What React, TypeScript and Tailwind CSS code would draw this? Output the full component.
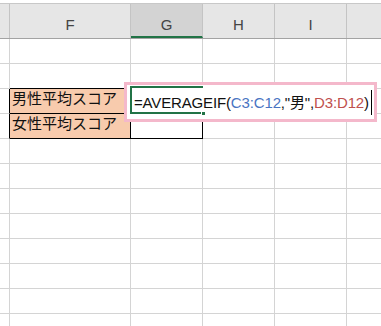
import React from "react";

const cols = [
  { key: "E", w: "w-[10px]", label: "" },
  { key: "F", w: "w-[121px]", label: "F" },
  { key: "G", w: "w-[72px]", label: "G" },
  { key: "H", w: "w-[72px]", label: "H" },
  { key: "I", w: "w-[72px]", label: "I" },
  { key: "J", w: "w-[72px]", label: "" },
];

// body cell styling; rows are 1-based like the sheet
const cellClass = (row: number, col: string) => {
  if (col === "E" && (row === 3 || row === 4))
    return "border-r border-b border-r-black border-b-[#d4d4d4]";
  if (row === 2 && (col === "F" || col === "G"))
    return "border-r border-b border-r-[#d4d4d4] border-b-black";
  if ((row === 3 || row === 4) && col === "F")
    return "border-r border-b border-black bg-[#f8cbad]";
  if ((row === 3 || row === 4) && col === "G")
    return "border-r border-b border-black";
  return "border-r border-b border-r-[#d4d4d4] border-b-[#d4d4d4]";
};

const labels: Record<number, string> = { 3: "男性平均スコア", 4: "女性平均スコア" };

export default function App() {
  const rows = Array.from({ length: 12 }, (_, i) => i + 1);

  return (
    <div className="relative w-[381px] h-[326px] overflow-hidden bg-white font-['Liberation_Sans','Noto_Sans_CJK_JP',sans-serif]">
      <div className="w-[419px]">
        {/* column header */}
        <div className="pt-[3px]">
          <div className="flex h-[36px] border-t border-b border-t-[#c8c8c8] border-b-[#a3a3a3] bg-[#e6e6e6]">
            {cols.map((c) => (
              <div
                key={c.key}
                className={`${c.w} shrink-0 flex justify-center pt-[12px] text-[15px] leading-[17px] text-[#444] border-r border-r-[#c4c4c4] ${
                  c.key === "G" ? "bg-[#d3d3d3] border-b-2 border-b-[#217346]" : ""
                }`}
              >
                {c.label}
              </div>
            ))}
          </div>
        </div>

        {/* grid rows */}
        {rows.map((r) => (
          <div key={r} className="flex h-[25px]">
            {cols.map((c) => (
              <div
                key={c.key}
                className={`${c.w} shrink-0 ${cellClass(r, c.key)} font-['Noto_Sans_CJK_JP',sans-serif] text-[15px] leading-[15px] pt-[1px] pl-[2px] text-[#111] whitespace-nowrap`}
              >
                {c.key === "F" ? labels[r] ?? "" : ""}
              </div>
            ))}
          </div>
        ))}
      </div>

      {/* in-cell formula editor, laid over G3 */}
      <div className="absolute left-[124px] top-[82px] w-[253px] h-[40px] border-[3px] border-[#f4b8cb] bg-white flex items-center pl-[7px]">
        <div className="absolute left-[3px] top-[1px] w-[73px] h-[28px] border-l-2 border-t-2 border-b-2 border-[#217346]" />
        <div className="absolute left-[74px] top-[26px] w-[5px] h-[5px] bg-[#217346] border border-white" />
        <span className="relative text-[15px] leading-[25px] tracking-[-0.15px] whitespace-nowrap text-[#111]">
          =AVERAGEIF(<span className="text-[#4a74c2]">C3:C12</span>,"男",
          <span className="text-[#c0504d]">D3:D12</span>)
        </span>
        <div className="relative ml-[2px] w-px h-[25px] bg-black" />
      </div>
    </div>
  );
}
